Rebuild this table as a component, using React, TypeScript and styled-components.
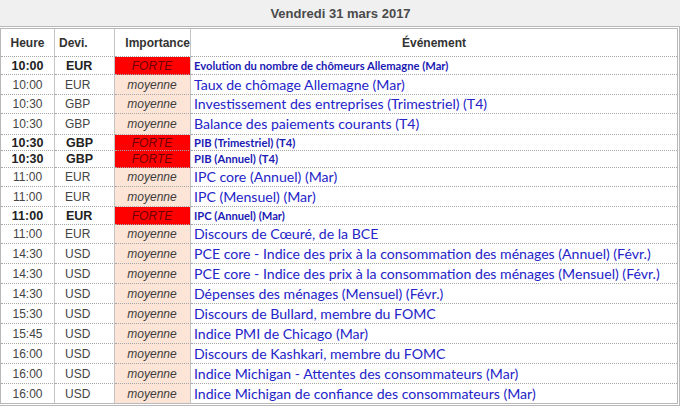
import styled, { createGlobalStyle } from "styled-components";

type Level = "forte" | "moyenne";

interface EventRow {
  time: string;
  currency: string;
  level: Level;
  label: string;
  h: number;
}

const EVENTS: EventRow[] = [
  { time: "10:00", currency: "EUR", level: "forte", label: "Evolution du nombre de chômeurs Allemagne (Mar)", h: 18 },
  { time: "10:00", currency: "EUR", level: "moyenne", label: "Taux de chômage Allemagne (Mar)", h: 20 },
  { time: "10:30", currency: "GBP", level: "moyenne", label: "Investissement des entreprises (Trimestriel) (T4)", h: 19 },
  { time: "10:30", currency: "GBP", level: "moyenne", label: "Balance des paiements courants (T4)", h: 21 },
  { time: "10:30", currency: "GBP", level: "forte", label: "PIB (Trimestriel) (T4)", h: 16 },
  { time: "10:30", currency: "GBP", level: "forte", label: "PIB (Annuel) (T4)", h: 17 },
  { time: "11:00", currency: "EUR", level: "moyenne", label: "IPC core (Annuel) (Mar)", h: 19 },
  { time: "11:00", currency: "EUR", level: "moyenne", label: "IPC (Mensuel) (Mar)", h: 20 },
  { time: "11:00", currency: "EUR", level: "forte", label: "IPC (Annuel) (Mar)", h: 18 },
  { time: "11:00", currency: "EUR", level: "moyenne", label: "Discours de Cœuré, de la BCE", h: 19 },
  { time: "14:30", currency: "USD", level: "moyenne", label: "PCE core - Indice des prix à la consommation des ménages (Annuel) (Févr.)", h: 20 },
  { time: "14:30", currency: "USD", level: "moyenne", label: "PCE core - Indice des prix à la consommation des ménages (Mensuel) (Févr.)", h: 20 },
  { time: "14:30", currency: "USD", level: "moyenne", label: "Dépenses des ménages (Mensuel) (Févr.)", h: 20 },
  { time: "15:30", currency: "USD", level: "moyenne", label: "Discours de Bullard, membre du FOMC", h: 20 },
  { time: "15:45", currency: "USD", level: "moyenne", label: "Indice PMI de Chicago (Mar)", h: 20 },
  { time: "16:00", currency: "USD", level: "moyenne", label: "Discours de Kashkari, membre du FOMC", h: 20 },
  { time: "16:00", currency: "USD", level: "moyenne", label: "Indice Michigan - Attentes des consommateurs (Mar)", h: 20 },
  { time: "16:00", currency: "USD", level: "moyenne", label: "Indice Michigan de confiance des consommateurs (Mar)", h: 19 },
];

const GlobalStyle = createGlobalStyle`
  body {
    margin: 0;
    background: #ffffff;
    font-family: "Liberation Sans", Arial, sans-serif;
  }
`;

const App = () => {
  return (
    <>
      <GlobalStyle />
      <StyledPage>
        <StyledTitleBar>Vendredi 31 mars 2017</StyledTitleBar>
        <StyledFrame>
          <StyledTable>
            <colgroup>
              <col style={{ width: 54 }} />
              <col style={{ width: 60 }} />
              <col style={{ width: 76 }} />
              <col />
            </colgroup>
            <thead>
              <tr>
                <StyledHead $align="center">Heure</StyledHead>
                <StyledHead $align="left">Devi.</StyledHead>
                <StyledHead $align="right">Importance</StyledHead>
                <StyledHead $align="center">Événement</StyledHead>
              </tr>
            </thead>
            <tbody>
              {EVENTS.map((ev, i) => {
                const strong = ev.level === "forte";
                return (
                  <StyledRow key={i} $h={ev.h}>
                    <StyledTime $strong={strong}>{ev.time}</StyledTime>
                    <StyledCurrency $strong={strong}>{ev.currency}</StyledCurrency>
                    <StyledImportance $level={ev.level}>
                      {strong ? "FORTE" : "moyenne"}
                    </StyledImportance>
                    <StyledEvent $strong={strong}>{ev.label}</StyledEvent>
                  </StyledRow>
                );
              })}
            </tbody>
          </StyledTable>
        </StyledFrame>
      </StyledPage>
    </>
  );
};

const StyledPage = styled.div`
  width: 680px;
  display: flex;
  flex-direction: column;
`;

const StyledTitleBar = styled.div`
  height: 26px;
  background: #f0f0f0;
  display: flex;
  align-items: center;
  justify-content: center;
  padding-left: 1px;
  font-size: 13px;
  font-weight: bold;
  color: #4a4a4a;
`;

const StyledFrame = styled.div`
  border: 1px solid #b8b8b8;
  border-left: none;
  padding: 1px 1px 1px 0;
`;

const StyledTable = styled.table`
  width: 100%;
  table-layout: fixed;
  border-collapse: separate;
  border-spacing: 0;
  border: 1px solid #b8b8b8;
`;

const cellBase = `
  padding: 0;
  border-bottom: 1px dotted #a6a6a6;
  white-space: nowrap;
  overflow: hidden;
  vertical-align: middle;
  line-height: 14px;
`;

const StyledHead = styled.th<{ $align: "left" | "center" | "right" }>`
  ${cellBase}
  height: 28px;
  box-sizing: border-box;
  font-size: 12px;
  font-weight: bold;
  color: #333333;
  text-align: ${({ $align }) => $align};
  padding-left: ${({ $align }) => ($align === "left" ? "4px" : "0")};
  &:not(:last-child) {
    border-right: 1px solid #c4c4c4;
  }
`;

const StyledRow = styled.tr<{ $h: number }>`
  height: ${({ $h }) => $h}px;
  &:last-child td {
    border-bottom: none;
  }
`;

const StyledTime = styled.td<{ $strong: boolean }>`
  ${cellBase}
  border-right: 1px solid #c4c4c4;
  text-align: center;
  font-size: ${({ $strong }) => ($strong ? "12.5px" : "12px")};
  font-weight: ${({ $strong }) => ($strong ? "bold" : "normal")};
  color: ${({ $strong }) => ($strong ? "#222222" : "#444444")};
`;

const StyledCurrency = styled.td<{ $strong: boolean }>`
  ${cellBase}
  border-right: 1px solid #c4c4c4;
  padding-left: ${({ $strong }) => ($strong ? "11px" : "10px")};
  font-size: ${({ $strong }) => ($strong ? "12.5px" : "12px")};
  font-weight: ${({ $strong }) => ($strong ? "bold" : "normal")};
  color: ${({ $strong }) => ($strong ? "#222222" : "#444444")};
`;

const StyledImportance = styled.td<{ $level: Level }>`
  ${cellBase}
  border-right: 1px solid #c4c4c4;
  text-align: center;
  font-size: 12px;
  font-style: italic;
  background: ${({ $level }) => ($level === "forte" ? "#ff0000" : "#fce4d6")};
  color: ${({ $level }) => ($level === "forte" ? "#6e0000" : "#3c3c3c")};
  padding-right: 1px;
`;

const StyledEvent = styled.td<{ $strong: boolean }>`
  ${cellBase}
  padding-left: 3px;
  font-family: Lato, "Open Sans", sans-serif;
  font-size: ${({ $strong }) => ($strong ? "11.2px" : "14.1px")};
  font-weight: ${({ $strong }) => ($strong ? "bold" : "normal")};
  color: ${({ $strong }) => ($strong ? "#1a1ab4" : "#2424c8")};
`;

export default App;
